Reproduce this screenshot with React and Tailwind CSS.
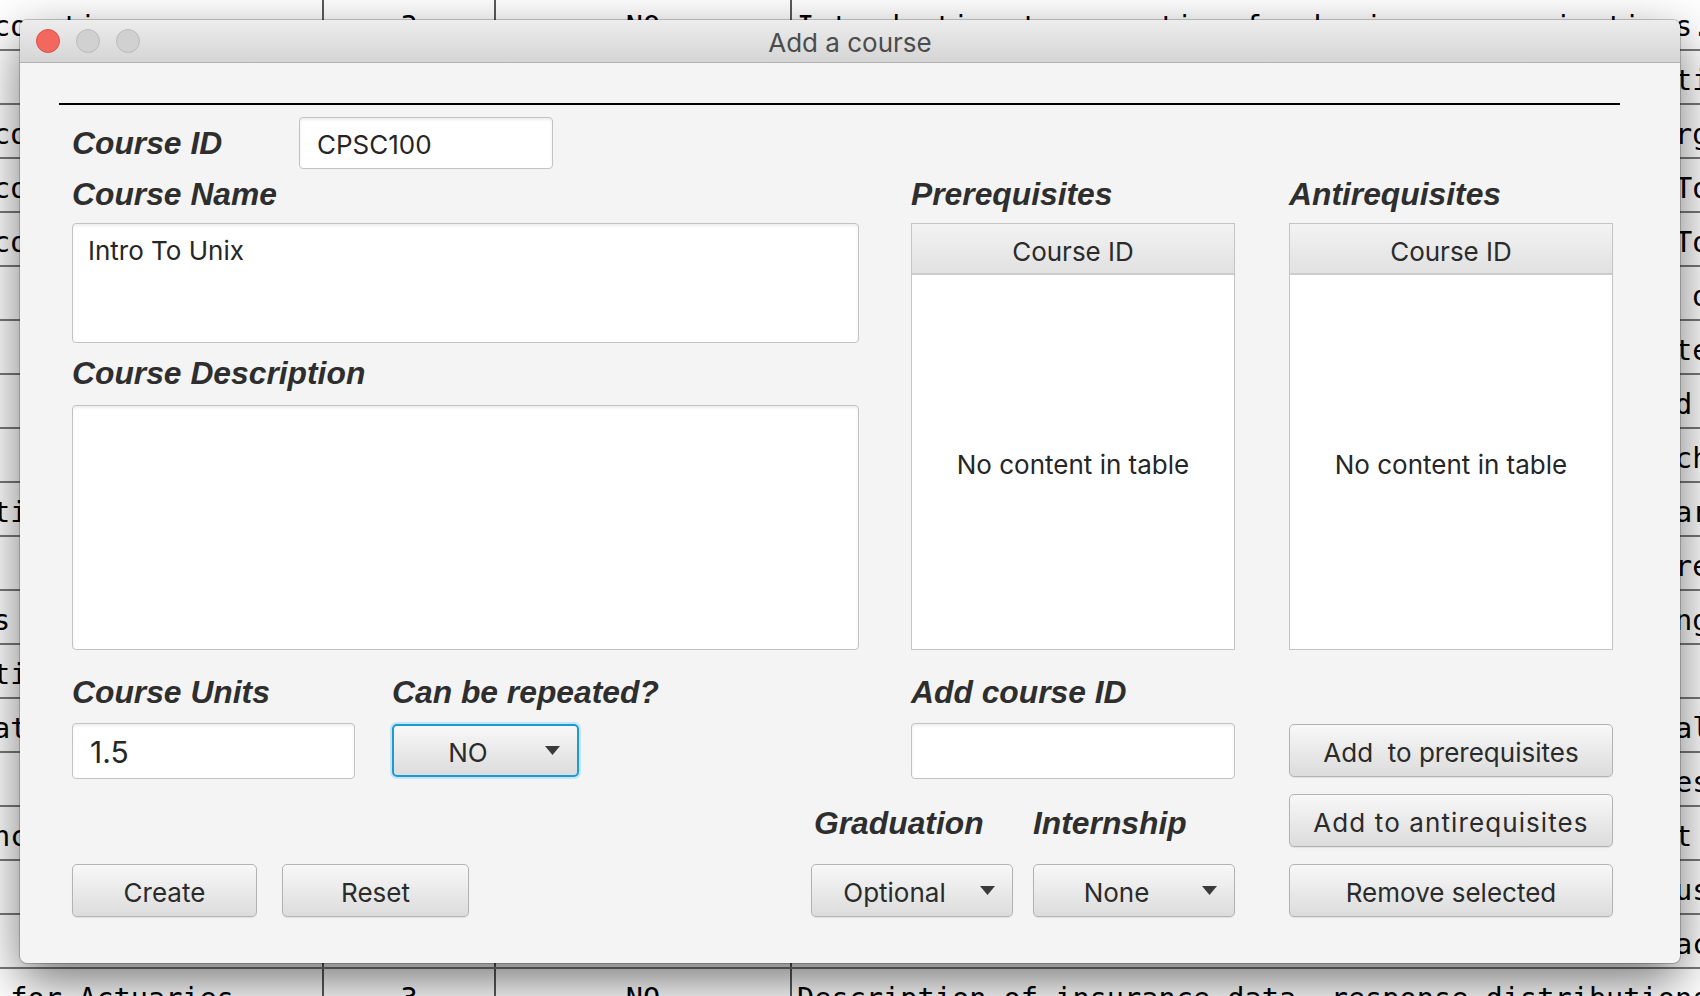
import React from 'react';

// rows of the course table sitting behind the dialog
const fit = (text, tail) => text.padEnd(51, ' ').slice(0, 51) + tail + ' of the course.';

const rows = [
  { name: 'counting', desc: 'Introduction to computing for business organizations.' },
  { name: '', desc: fit('Principles of management and leadership in modern', 'ti') },
  { name: 'corporate finance', desc: fit('Financial statements and reporting for small and la', 'rg') },
  { name: 'cost accounting', desc: fit('Costing systems and budgeting for manufacturing fi', 'To') },
  { name: 'commerce law', desc: fit('Legal framework of contracts and sales transaction', 'To') },
  { name: '', desc: fit('Survey of economic theory and applications to publi', ' d') },
  { name: '', desc: fit('Data structures and algorithms for problem solving', 'te') },
  { name: '', desc: fit('Operating systems concepts: processes, memory and o', 'd ') },
  { name: '', desc: fit('Software engineering practices and team project wor', 'ch') },
  { name: 'tion theory', desc: fit('Probability models, random variables and their appl', 'ar') },
  { name: '', desc: fit('Linear algebra with applications to science and mo', 're') },
  { name: 's ', desc: fit('Numerical methods for differential equations and sc', 'ng') },
  { name: 'tics', desc: fit('Statistical inference and regression for data', '  ') },
  { name: 'atistics', desc: fit('Sampling, estimation and hypothesis testing with re', 'al') },
  { name: '', desc: fit('Databases, query languages and transaction process', 'es') },
  { name: 'nce', desc: fit('Time value of money, bonds, stocks and investmen', 't ') },
  { name: '', desc: fit('Computer networks, protocols and internet services', 'us') },
  { name: '', desc: fit('Marketing research methods and consumer behaviour; pr', 'ac') },
  { name: ' for Actuaries', desc: 'Description of insurance data, response distributions.' },
];

function BackgroundTable() {
  return (
    <div className="-mt-[3px] font-['DejaVu_Sans_Mono',monospace] text-[28.6px] text-black">
      {rows.map((r, i) => (
        <div key={i} className="flex h-[54px] border-b-2 border-[#7a7a7a] bg-white">
          <div className="w-[324px] shrink-0 flex items-center pt-[6px] border-r-2 border-[#5a5a5a] overflow-hidden whitespace-pre">
            <span className="-ml-[7px]">{r.name}</span>
          </div>
          <div className="w-[172px] shrink-0 flex items-center justify-center pt-[6px] border-r-2 border-[#5a5a5a]">3</div>
          <div className="w-[296px] shrink-0 flex items-center justify-center pt-[6px] border-r-2 border-[#5a5a5a]">NO</div>
          <div className="flex-1 flex items-center pt-[6px] pl-[5px] whitespace-pre overflow-hidden">{r.desc}</div>
        </div>
      ))}
    </div>
  );
}

function Label({ className = '', children }) {
  return (
    <div className={`h-[36px] leading-[36px] font-['Liberation_Sans',Arial,sans-serif] text-[31.8px] font-bold italic text-[#2e2e2e] whitespace-nowrap ${className}`}>
      {children}
    </div>
  );
}

function Field({ className = '', children }) {
  return (
    <div className={`bg-white border border-[#c2c2c2] rounded-[4px] shadow-[inset_0_2px_3px_rgba(0,0,0,0.07)] text-[#262626] ${className}`}>
      {children}
    </div>
  );
}

function Btn({ className = '', children }) {
  return (
    <div className={`flex items-center justify-center pt-[3px] rounded-[5px] border border-[#b3b3b3] bg-gradient-to-b from-[#f8f8f8] to-[#dcdcdc] shadow-[0_1px_1px_rgba(0,0,0,0.08)] text-[26px] text-[#2b2b2b] whitespace-pre ${className}`}>
      {children}
    </div>
  );
}

function Arrow() {
  return (
    <svg width="15" height="9" viewBox="0 0 15 9">
      <polygon points="0,0 15,0 7.5,9" fill="#3a3a3a" />
    </svg>
  );
}

function Combo({ className = '', focused, children }) {
  const frame = focused
    ? 'border-2 border-[#1b9ad4] shadow-[0_0_0_2px_#c3e5f5]'
    : 'border border-[#b3b3b3] shadow-[0_1px_1px_rgba(0,0,0,0.08)]';
  return (
    <div className={`flex items-center rounded-[5px] bg-gradient-to-b from-[#f8f8f8] to-[#dcdcdc] text-[26px] text-[#2b2b2b] ${frame} ${className}`}>
      <span className="flex-1 pl-[15px] pt-[3px] text-center">{children}</span>
      <span className="w-[50px] flex justify-center">
        <Arrow />
      </span>
    </div>
  );
}

function Table({ className = '' }) {
  return (
    <div className={`h-[427px] flex flex-col bg-white border border-[#c4c4c4] ${className}`}>
      <div className="h-[51px] shrink-0 flex items-center justify-center pt-[5px] bg-gradient-to-b from-[#f3f3f3] to-[#e1e1e1] border-b-2 border-[#cdcdcd] text-[26px] text-[#2b2b2b]">
        Course ID
      </div>
      <div className="flex-1 flex items-center justify-center pt-[4px] text-[26px] text-[#262626]">No content in table</div>
    </div>
  );
}

function TitleBar() {
  return (
    <div className="h-[43px] shrink-0 flex items-center bg-gradient-to-b from-[#ededed] to-[#d5d5d5] border-b border-[#b2b2b2]">
      <div className="w-[200px] pl-[16px] flex gap-[16px]">
        <span className="w-[24px] h-[24px] rounded-full bg-[#f2685e] border border-[#dc5048]" />
        <span className="w-[24px] h-[24px] rounded-full bg-[#d1d1d1] border border-[#bababa]" />
        <span className="w-[24px] h-[24px] rounded-full bg-[#d1d1d1] border border-[#bababa]" />
      </div>
      <div className="flex-1 text-center pt-[3px] text-[26px] text-[#4c4c4c]">Add a course</div>
      <div className="w-[200px]" />
    </div>
  );
}

function Window() {
  return (
    <div className="absolute left-[20px] top-[20px] w-[1660px] h-[943px] rounded-[7px] overflow-hidden bg-[#f4f4f4] shadow-[0_18px_50px_rgba(0,0,0,0.55),0_0_0_1px_rgba(0,0,0,0.2)] flex flex-col font-['Inter','Liberation_Sans',sans-serif]">
      <TitleBar />
      <div className="flex-1 pl-[52px] pr-[67px] pt-[40px]">
        <div className="h-[2px] bg-black -ml-[13px] -mr-[7px]" />

        <div className="mt-[12px] flex">
          <div className="w-[787px] flex flex-col">
            <div className="flex items-center h-[52px]">
              <Label className="w-[227px]">Course ID</Label>
              <Field className="w-[254px] h-[52px] flex items-center pl-[17px] pt-[3px] text-[26px]">CPSC100</Field>
            </div>
            <Label className="mt-[7px]">Course Name</Label>
            <Field className="mt-[11px] h-[120px] pl-[15px] pt-[7px] text-[26px]">Intro To Unix</Field>
            <Label className="mt-[12px]">Course Description</Label>
            <Field className="mt-[14px] h-[245px]" />
          </div>
          <div className="ml-[52px] w-[324px] pt-[59px]">
            <Label>Prerequisites</Label>
            <Table className="mt-[11px]" />
          </div>
          <div className="ml-[54px] w-[324px] pt-[59px]">
            <Label>Antirequisites</Label>
            <Table className="mt-[11px]" />
          </div>
        </div>

        <div className="mt-[24px] flex h-[243px]">
          <div className="w-[739px] flex flex-col">
            <div className="flex gap-[37px]">
              <div className="flex flex-col">
                <Label>Course Units</Label>
                <Field className="mt-[13px] w-[283px] h-[56px] flex items-center pl-[17px] pt-[3px] text-[30px]">1.5</Field>
              </div>
              <div className="flex flex-col">
                <Label>Can be repeated?</Label>
                <Combo focused className="mt-[14px] w-[187px] h-[53px]">NO</Combo>
              </div>
            </div>
            <div className="mt-auto flex gap-[25px]">
              <Btn className="w-[185px] h-[53px]">Create</Btn>
              <Btn className="w-[187px] h-[53px]">Reset</Btn>
            </div>
          </div>

          <div className="w-[424px] flex flex-col">
            <div className="ml-[100px] flex flex-col">
              <Label>Add course ID</Label>
              <Field className="mt-[13px] w-[324px] h-[56px]" />
            </div>
            <div className="mt-auto mb-[23px] flex gap-[20px]">
              <Label className="w-[202px] pl-[3px]">Graduation</Label>
              <Label>Internship</Label>
            </div>
            <div className="flex gap-[20px]">
              <Combo className="w-[202px] h-[53px]">Optional</Combo>
              <Combo className="w-[202px] h-[53px]">None</Combo>
            </div>
          </div>

          <div className="ml-[54px] w-[324px] pt-[50px] flex flex-col gap-[17px]">
            <Btn className="h-[53px]">{'Add  to prerequisites'}</Btn>
            <Btn className="h-[53px] tracking-[1.1px]">Add to antirequisites</Btn>
            <Btn className="h-[53px]">Remove selected</Btn>
          </div>
        </div>
      </div>
    </div>
  );
}

export default function App() {
  return (
    <div className="relative w-[1700px] h-[996px] overflow-hidden bg-white">
      <BackgroundTable />
      <Window />
    </div>
  );
}
